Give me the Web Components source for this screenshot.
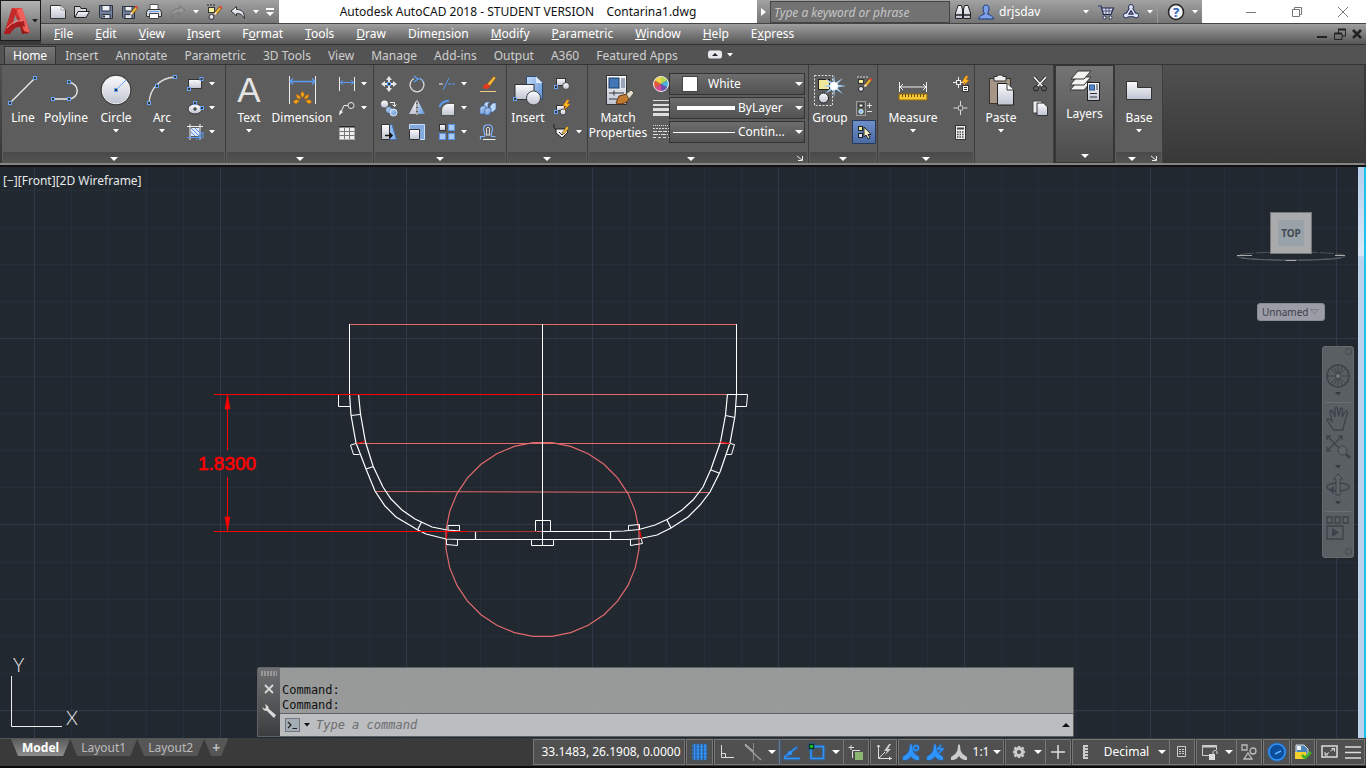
<!DOCTYPE html>
<html lang="en">
<head>
<meta charset="utf-8">
<title>Autodesk AutoCAD 2018</title>
<style>
  html, body { height: 100%; }
  body {
    margin: 0;
    overflow: hidden;
    background: #111;
    color: #fff;
    font: 12px/16px "Noto Sans", "Open Sans", sans-serif;
  }
</style>
</head>
<body>
<cad-app>
  <app-header slot="header"></app-header>
  <ribbon-tabs slot="header">
    <button class="active">Home</button><button>Insert</button><button>Annotate</button><button>Parametric</button><button>3D Tools</button><button>View</button><button>Manage</button><button>Add-ins</button><button>Output</button><button>A360</button><button>Featured Apps</button>
  </ribbon-tabs>
  <cad-ribbon slot="header">
    <ribbon-panel style="--w:224px; --cols:40px 46px 54px 38px 42px">
      <big-tool icon="line">Line</big-tool>
      <big-tool icon="polyline">Polyline</big-tool>
      <big-tool icon="circle" menu>Circle</big-tool>
      <big-tool icon="arc" menu>Arc</big-tool>
      <tool-stack>
        <small-tool icon="rect" menu label="Rectangle"></small-tool>
        <small-tool icon="ellipse" menu label="Ellipse"></small-tool>
        <small-tool icon="hatch" menu label="Hatch"></small-tool>
      </tool-stack>
    </ribbon-panel>
    <ribbon-panel style="--w:148px; --cols:44px 62px 40px">
      <big-tool icon="text" menu>Text</big-tool>
      <big-tool icon="dimension">Dimension</big-tool>
      <tool-stack>
        <small-tool icon="linear" menu label="Linear"></small-tool>
        <small-tool icon="leader" menu label="Leader"></small-tool>
        <small-tool icon="table" label="Table"></small-tool>
      </tool-stack>
    </ribbon-panel>
    <ribbon-panel style="--w:133px; --cols:28px 30px 41px 32px">
      <tool-stack>
        <small-tool icon="move" label="Move"></small-tool>
        <small-tool icon="copy" label="Copy"></small-tool>
        <small-tool icon="stretch" label="Stretch"></small-tool>
      </tool-stack>
      <tool-stack>
        <small-tool icon="rotate" label="Rotate"></small-tool>
        <small-tool icon="mirror" label="Mirror"></small-tool>
        <small-tool icon="scale" label="Scale"></small-tool>
      </tool-stack>
      <tool-stack>
        <small-tool icon="trim" menu label="Trim"></small-tool>
        <small-tool icon="fillet" menu label="Fillet"></small-tool>
        <small-tool icon="array" menu label="Array"></small-tool>
      </tool-stack>
      <tool-stack>
        <small-tool icon="erase" label="Erase"></small-tool>
        <small-tool icon="explode" label="Explode"></small-tool>
        <small-tool icon="offset" label="Offset"></small-tool>
      </tool-stack>
    </ribbon-panel>
    <ribbon-panel style="--w:81px; --cols:40px 40px">
      <big-tool icon="insert">Insert</big-tool>
      <tool-stack>
        <small-tool icon="block" label="Create block"></small-tool>
        <small-tool icon="blockedit" label="Edit block"></small-tool>
        <small-tool icon="attrib" menu label="Edit attributes"></small-tool>
      </tool-stack>
    </ribbon-panel>
    <ribbon-panel launcher style="--w:221px; --cols:58px 22px 138px">
      <big-tool icon="match">Match<br>Properties</big-tool>
      <tool-stack>
        <small-tool icon="wheel" label="Object color"></small-tool>
        <small-tool icon="weights" label="Lineweight"></small-tool>
        <small-tool icon="types" label="Linetype"></small-tool>
      </tool-stack>
      <tool-stack>
        <prop-combo label="Color" value="White" kind="swatch"></prop-combo>
        <prop-combo label="Lineweight" value="ByLayer" kind="thick"></prop-combo>
        <prop-combo label="Linetype" value="Contin..." kind="thin"></prop-combo>
      </tool-stack>
    </ribbon-panel>
    <ribbon-panel style="--w:69px; --cols:40px 27px">
      <big-tool icon="group">Group</big-tool>
      <tool-stack>
        <small-tool icon="groupedit" label="Group edit"></small-tool>
        <small-tool icon="ungroup" label="Ungroup"></small-tool>
        <small-tool icon="groupsel" label="Group selection" on></small-tool>
      </tool-stack>
    </ribbon-panel>
    <ribbon-panel style="--w:97px; --cols:68px 28px">
      <big-tool icon="measure" menu>Measure</big-tool>
      <tool-stack>
        <small-tool icon="quicksel" label="Quick select"></small-tool>
        <small-tool icon="point" label="Point"></small-tool>
        <small-tool icon="calc" label="Calculator"></small-tool>
      </tool-stack>
    </ribbon-panel>
    <ribbon-panel plain style="--w:79px; --cols:50px 28px">
      <big-tool icon="paste" menu>Paste</big-tool>
      <tool-stack>
        <small-tool icon="cut" label="Cut"></small-tool>
        <small-tool icon="clip" label="Copy clip"></small-tool>
      </tool-stack>
    </ribbon-panel>
    <ribbon-panel raised style="--w:61px; --cols:57px">
      <big-tool icon="layers">Layers</big-tool>
    </ribbon-panel>
    <ribbon-panel launcher style="--w:48px; --cols:46px">
      <big-tool icon="base" menu>Base</big-tool>
    </ribbon-panel>
  </cad-ribbon>
  <drawing-area>
    <view-cube></view-cube>
    <nav-bar></nav-bar>
    <command-line></command-line>
  </drawing-area>
  <layout-tabs slot="footer"></layout-tabs>
  <status-bar slot="footer"></status-bar>
</cad-app>

<script>
// every icon is [width, height, markup]
const DEFS = `<defs>
  <linearGradient id="g" x1="0" y1="0" x2="0" y2="1"><stop offset="0" stop-color="#fbfbfd"/><stop offset="1" stop-color="#bfc4d2"/></linearGradient>
  <linearGradient id="b" x1="0" y1="0" x2="1" y2="1"><stop offset="0" stop-color="#c4dcfa"/><stop offset="1" stop-color="#5d8ed0"/></linearGradient>
  <linearGradient id="r" x1="0" y1="0" x2="0" y2="1"><stop offset="0" stop-color="#e8403c"/><stop offset="1" stop-color="#8e1517"/></linearGradient>
</defs>`;
const grip = (x, y) => `<rect x="${x - 1.5}" y="${y - 1.5}" width="3" height="3" fill="#333" stroke="#6aa4f8"/>`;
const PENCIL = `<path d="M8 11L9 8L14 2L16 4L11 10Z" fill="#efb63c" stroke="#5b3d10" stroke-width=".7"/><path d="M13 3L14 1.500L16 3L15 5Z" fill="#e0443a"/><path d="M8 11L9 8L11 10Z" fill="#fff"/>`;
const BOLT = `<path d="M13 0L9 6H12L10 10L16 4H13L15 0Z" fill="#ffc21e" stroke="#e8730d" stroke-width=".6"/>`;
const PERSON = `<path d="M8 0C6.500 1 7 4 6.500 6C6 9 3 11 0 13V16C3.500 16.500 6 15 8 12C10 15 12.500 16.500 16 16V13C13 11 10 9 9.500 6C9 4 9.500 1 8 0Z" fill="currentColor"/>`;

const ICONS = {
  logo: [26, 28, `<path d="M0 27L8 1H18L26 26L18 27L16 20L8 21L6 27Z" fill="url(#r)"/><path d="M8 1L13 3L6 27H0Z" fill="#c52a2b"/><path d="M18 1L26 26L20 24L13 3Z" fill="#f0605a"/><path d="M0 27C5 18 12 13 20 14L21 20C15 17 10 21 6 27Z" fill="#a91d20"/><path d="M11 8L14 14L9 17Z" fill="#8f8f8f"/><path d="M3 21C8 15 14 13 19 14" stroke="#f7938c" fill="none"/>`],
  new: [16, 16, `<path d="M.5 1.500H11L15.500 6V14.500H.5Z" fill="url(#g)" stroke="#333"/><path d="M11 1.500V6H15.500Z" fill="#fff" stroke="#777" stroke-width=".7"/>`],
  open: [16, 16, `<path d="M.5 13.500V2.500H6L7 4.500H12.500V7" fill="#d6d8de" stroke="#222"/><path d="M1 13.500L4 7.500H15.500L12 13.500Z" fill="url(#g)" stroke="#222"/>`],
  save: [16, 16, `<path d="M1.500 1.500H14.500V14.500H3L1.500 13Z" fill="#70809a" stroke="#2c3340"/><path d="M4 1.500H12V7H4Z" fill="#eef0f4" stroke="#2c3340"/><path d="M4 10.500H12V14.500H4Z" fill="#dfe3ea" stroke="#2c3340"/><path d="M6 11.500V13.500" stroke="#2c3340" stroke-width="2"/>`],
  saveas: [16, 16, `<path d="M.5 2.500H12.500V14.500H2L.5 13Z" fill="#70809a" stroke="#2c3340"/><path d="M3 2.500H10V7H3Z" fill="#eef0f4" stroke="#2c3340"/><path d="M3 10.500H10V14.500H3Z" fill="#dfe3ea" stroke="#2c3340"/>${PENCIL}`],
  print: [16, 16, `<path d="M4 .5H12V6H4Z" fill="#fff" stroke="#555"/><path d="M2 5.500H14L15.500 8V12.500H.5V8Z" fill="#d5d8de" stroke="#333"/><path d="M3.500 9.500H12.500V14.500H3.500Z" fill="#fff" stroke="#444"/><path d="M3 7.500H13" stroke="#6aa4f8"/>`],
  redo: [16, 16, `<path d="M15 6L9.500 1.500V4.500C4 4.500 1.500 7 1.500 13.500C4 9.500 6 8.500 9.500 8.500V11Z" fill="#969696" stroke="#777"/>`],
  undo: [16, 16, `<path d="M1 7L6.500 2.500V5.500C12 5.500 14.500 8 14.500 14.500C12 10.500 10 9.500 6.500 9.500V12Z" fill="url(#g)" stroke="#333"/>`],
  qmatch: [16, 16, `<path d="M1 1H10" stroke="#222" stroke-dasharray="2 1"/><rect x="2.500" y="3.500" width="6" height="5" fill="#f5f0a0" stroke="#333"/><circle cx="5.500" cy="13" r="2.500" fill="url(#g)" stroke="#333"/>${PENCIL}`],
  custom: [10, 8, `<path d="M1 1H9" stroke="#fff" stroke-width="2"/><path d="M1 4H9L5 8Z" fill="#fff"/>`],
  bino: [16, 16, `<g fill="url(#g)" stroke="#222"><path d="M3 1.500H6.500L7.500 6V14.500H.5V9Z"/><path d="M9.500 1.500H13L15.500 9V14.500H8.500V6Z"/></g><path d="M.5 11H7M9 11H15.500M7 6H9" stroke="#222" stroke-width="1.500"/>`],
  user: [16, 16, `<path d="M5 4C5 0 11 0 11 4C11 7 10 9 9.500 10C12 11 15 12 15.500 15H.5C1 12 4 11 6.500 10C6 9 5 7 5 4Z" fill="#7ba0e8" stroke="#1f3b80"/>`],
  cart: [16, 16, `<path d="M0 2H3L5.500 10.500H13L15.500 4H4" fill="#d8dce8" stroke="#222a55" stroke-width="1.200"/><path d="M5 7H14M8 4V10M11 4V10" stroke="#222a55" stroke-width=".7"/><circle cx="6.500" cy="13.500" r="1.500" fill="#fff" stroke="#222a55"/><circle cx="12.500" cy="13.500" r="1.500" fill="#fff" stroke="#222a55"/>`],
  a360: [16, 16, `<path d="M8 4L12.500 11.500H3.500Z" fill="none" stroke="#222a55" stroke-width="3.500"/><g fill="#dfe6f7" stroke="#222a55"><circle cx="8" cy="3" r="2.500"/><circle cx="3" cy="11.500" r="2.500"/><circle cx="13" cy="11.500" r="2.500"/></g><path d="M8 4L12.500 11.500H3.500Z" fill="none" stroke="#dfe6f7" stroke-width="1.500"/>`],
  help: [18, 18, `<circle cx="9" cy="9" r="7.500" fill="#f4f6fb" stroke="#222" stroke-width="1.500"/><text x="9" y="14" text-anchor="middle" font-family="Open Sans, sans-serif" font-weight="bold" font-size="13" fill="#2a5fb8">?</text>`],
  min: [10, 10, `<path d="M0 5.500H10" stroke="#777"/>`],
  max: [10, 10, `<path d="M.5 2.500H7.500V9.500H.5ZM2.500 2.500V.5H9.500V7.500H7.500" fill="none" stroke="#777"/>`],
  close: [10, 10, `<path d="M0 0L10 10M10 0L0 10" stroke="#777"/>`],
  dmin: [12, 12, `<path d="M1 9H11" stroke="#222" stroke-width="2"/>`],
  dmax: [12, 12, `<path d="M.5 5.500H8V11.500H.5ZM4.500 5V1.500H11.500V8H8" fill="none" stroke="#222"/><path d="M.5 5.500H8M4 1.500H12" stroke="#222" stroke-width="2"/>`],
  dclose: [10, 12, `<path d="M1 2L9 10M9 2L1 10" stroke="#222" stroke-width="2.500"/>`],
  pill: [14, 10, `<rect x=".5" y="1" width="13" height="7" rx="1.500" fill="#e6e6ee" stroke="#eee"/><path d="M7 3L10 6H4Z" fill="#222"/>`],
  line: [32, 32, `<path d="M3 29L28 4" stroke="#eee" stroke-width="1.300"/>${grip(3, 29)}${grip(28, 4)}`],
  polyline: [32, 32, `<path d="M3 25H19A8 8 0 0 0 19 8.500" fill="none" stroke="#eee" stroke-width="1.400"/>${grip(3, 25)}${grip(19, 25)}${grip(19, 8)}`],
  circle: [32, 32, `<circle cx="16" cy="16" r="14" fill="url(#g)" stroke="#eee"/><circle cx="16" cy="16" r="15" fill="none" stroke="#383838"/><path d="M16 16L26 6" stroke="#6aa4f8"/>${grip(16, 16)}`],
  arc: [32, 32, `<path d="M3 29C4 14 14 4 29 3" fill="none" stroke="#ddd" stroke-width="1.400"/>${grip(3, 29)}${grip(11, 12)}${grip(29, 3)}`],
  rect: [16, 16, `<rect x="1.500" y="3.500" width="13" height="9" fill="url(#g)" stroke="#333"/>${grip(2, 13)}${grip(14.5, 3)}`],
  ellipse: [16, 16, `<ellipse cx="8" cy="9" rx="7" ry="5" fill="url(#g)" stroke="#333"/><path d="M8 7V11M6 9H10" stroke="#222"/>${grip(8, 3)}${grip(15, 8)}`],
  hatch: [16, 16, `<path d="M3 0V16M13 0V16M0 2.500H16M0 13.500H16" stroke="#eee"/><rect x="4" y="4" width="8" height="8" fill="#dde8f8"/><path d="M4 8L8 12M4 4L12 12M8 4L12 8" stroke="#5a8fdc"/><path d="M9 16L16 8V13.500H0M13 6V16" fill="none" stroke="#5a9bf5"/>`],
  text: [32, 32, `<text x="16" y="28" text-anchor="middle" font-family="Liberation Sans, sans-serif" font-size="35" fill="#e4e4e4">A</text>`],
  dimension: [32, 32, `<path d="M3.500 2V30M29.500 2V30" stroke="#eee"/><path d="M4 7.500H29M7 4.500L4 7.500L7 10.500M26 4.500L29 7.500L26 10.500" fill="none" stroke="#5a9bf5" stroke-width="1.300"/><g fill="#f5a318" stroke="#b35d0a" stroke-width=".5"><path d="M16.500 17L18.500 20.500L16.500 24L14.500 20.500Z"/><path d="M10 20L14 22L14.500 25.500L11 24Z"/><path d="M23 20L19 22L18.500 25.500L22 24Z"/><path d="M7 28L10 25.500L13.500 27L10 30Z"/><path d="M26 28L23 25.500L19.500 27L23 30Z"/></g>`],
  linear: [16, 16, `<path d="M.5 1V15M15.500 1V15" stroke="#eee"/><path d="M1 6.500H15M4 4L1.500 6.500L4 9M12 4L14.500 6.500L12 9" fill="none" stroke="#5a9bf5"/>`],
  leader: [16, 16, `<path d="M1 14L5 5.500H9" fill="none" stroke="#eee"/><circle cx="12" cy="5.500" r="3" fill="#555" stroke="#eee"/><path d="M0 15.500L1 10L4 12Z" fill="#eee"/>`],
  table: [16, 16, `<rect x=".5" y="1.500" width="15" height="14" fill="#eee" stroke="#aaa"/><path d="M0 2.500H16" stroke="#222" stroke-width="2"/><path d="M.5 7.500H15.500M.5 11.500H15.500M5.500 4V15M10.500 4V15" stroke="#777"/>`],
  move: [16, 16, `<path d="M8 0L11 4H9V6H7V4H5ZM8 16L5 12H7V10H9V12H11ZM0 8L4 5V7H6V9H4V11ZM16 8L12 11V9H10V7H12V5Z" fill="#e6e6e6"/>${grip(8, 8)}`],
  copy: [16, 16, `<circle cx="3.500" cy="4" r="3.500" fill="url(#g)"/><circle cx="8" cy="10" r="3.500" fill="url(#b)" stroke="#333" stroke-width=".6"/><circle cx="12.500" cy="12.500" r="3.500" fill="url(#b)" stroke="#dceafc"/><path d="M9 2.500H13.500V6M11.500 4.500L13.500 6.500L15.500 4.500" fill="none" stroke="#eee"/>`],
  stretch: [16, 16, `<path d="M7 .5H11L15.500 15.500H7Z" fill="#8bb4ea" stroke="#436fb0"/><path d="M.5.5H8.500V15.500H.5Z" fill="url(#g)" stroke="#333"/><path d="M4 11.500H11M8.500 9L11 11.500L8.500 14" fill="none" stroke="#111" stroke-width="1.500"/>`],
  rotate: [16, 16, `<path d="M5 2.500A7 7 0 1 0 11 2.500" fill="none" stroke="#ddd" stroke-width="1.300"/><path d="M5 0L9 3L5 6" fill="none" stroke="#5a9bf5" stroke-width="1.500"/><path d="M9 3C11 2 13 3 15 6" fill="none" stroke="#5a9bf5"/>`],
  mirror: [16, 16, `<path d="M7 1V14H0Z" fill="url(#g)"/><path d="M9 1V14H16Z" fill="url(#b)"/><path d="M8 0V16" stroke="#eee" stroke-dasharray="3 1"/>`],
  scale: [16, 16, `<path d="M.5.5H15.500V15.500H.5Z" fill="#82aade" stroke="#c6dcfb"/><path d="M.5 5.500H10.500V15.500H.5Z" fill="url(#g)" stroke="#333"/>`],
  trim: [16, 16, `<path d="M0 8H4" stroke="#eee"/><path d="M9 8H16" stroke="#5a9bf5" stroke-dasharray="3 1"/><path d="M4 14L10 2" stroke="#5a9bf5"/>`],
  fillet: [16, 16, `<path d="M2.500 15.500V11C2.500 6 6 3.500 10 3.500H15.500V15.500Z" fill="url(#g)" stroke="#333" stroke-width=".7"/><path d="M.5 7C2 3 5 1 10 .8" fill="none" stroke="#5a9bf5" stroke-width="2"/>`],
  array: [16, 16, `<rect x=".5" y=".5" width="6" height="6" fill="url(#g)" stroke="#333"/><g fill="#a9c9f2" stroke="#5b93e0"><rect x="9.500" y=".5" width="6" height="6"/><rect x=".5" y="9.500" width="6" height="6"/><rect x="9.500" y="9.500" width="6" height="6"/></g>`],
  erase: [16, 16, `<path d="M7 8L14 0L16 2L10 10Z" fill="#f3b73e" stroke="#6e4610" stroke-width=".6"/><path d="M3 12C3 8 6 7 8 8L10 10C9 13 6 14 3 12Z" fill="#e23b20"/><path d="M0 15.500H16" stroke="#f4cc8a"/>`],
  explode: [16, 16, `<g stroke="#35609f" stroke-width=".6"><path d="M4 4L6 2H10L8 4V8H4Z" fill="#bcd6f8"/><path d="M0 8L2 6H6V12L4 14H0Z" fill="url(#b)"/><path d="M10 6L13 3H16V9L13 12H10Z" fill="#bcd6f8"/><path d="M5 10L7 8H11V12L9 15H5Z" fill="url(#b)"/></g>`],
  offset: [16, 16, `<path d="M.5 15.500V12.500H4.500C5.500 11 3.500 7 3.500 5C3.500-.7 12.500-.7 12.500 5C12.500 7 10.500 11 11.500 12.500H15.500" fill="none" stroke="#7db4ff" stroke-width="1.200"/><path d="M3 15.500H15.500M6 11H10C8.500 9 10 6 9.500 4.500C9 3 7 3 6.500 4.500C6 6 7.500 9 6 11" fill="none" stroke="#eee"/>`],
  insert: [32, 32, `<path d="M14.500 2.500H24L30.500 9V25H14.500Z" fill="url(#b)" stroke="#2f4c78"/><path d="M24 2.500V9H30.500" fill="#dce9fb"/><rect x="3" y="10.500" width="19" height="15" fill="url(#g)" stroke="#333"/><circle cx="21.500" cy="24" r="7" fill="url(#g)" stroke="#444"/>${grip(3, 25)}`],
  block: [16, 16, `<rect x="2.500" y="2.500" width="9" height="7" fill="url(#g)" stroke="#333"/><circle cx="12" cy="10" r="3.500" fill="url(#g)" stroke="#444"/>${grip(2, 11)}`],
  blockedit: [16, 16, `<rect x="2.500" y="5.500" width="8" height="5" fill="url(#g)" stroke="#333"/><circle cx="9" cy="12" r="3" fill="url(#g)" stroke="#444"/>${grip(2, 12)}${BOLT}`],
  attrib: [16, 16, `<path d="M0 0V4L3 6" fill="none" stroke="#222"/><path d="M2 5H11L14 8L8 14L2 9Z" fill="#eee" stroke="#222"/><path d="M5 8L8 11L11 8" fill="none" stroke="#222"/><path d="M8 9L13 2L15 4L10 10Z" fill="#efb63c" stroke="#5b3d10" stroke-width=".5"/>`],
  match: [32, 32, `<rect x="4.500" y="1.500" width="20" height="29" fill="url(#g)" stroke="#333"/><rect x="7" y="4" width="10" height="10" fill="#4377b5" stroke="#1d3e68"/><path d="M19 4H23V14H19Z" fill="#98a5bb"/><path d="M7 19H22M12 16.500V21.500M7 25H15" stroke="#333"/><path d="M17 22L25 20L27 25C24 30 18 31 14 29Z" fill="#c17a30" stroke="#65360e"/><path d="M24 20L29 16L32 19L27 25Z" fill="#e3dccf" stroke="#554"/>`],
  wheel: [16, 16, `<g stroke="none"><path d="M8 8V.5A7.500 7.500 0 0 1 14.500 4.200Z" fill="#b7d64c"/><path d="M8 8L14.500 4.200A7.500 7.500 0 0 1 14.500 11.800Z" fill="#4bb0dc"/><path d="M8 8L14.500 11.800A7.500 7.500 0 0 1 8 15.500Z" fill="#704dae"/><path d="M8 8V15.500A7.500 7.500 0 0 1 1.500 11.800Z" fill="#d7478b"/><path d="M8 8L1.500 11.800A7.500 7.500 0 0 1 1.500 4.200Z" fill="#e35c37"/><path d="M8 8L1.500 4.200A7.500 7.500 0 0 1 8 .5Z" fill="#f3d14a"/></g><circle cx="8" cy="8" r="7.500" fill="none" stroke="#eee"/>`],
  weights: [16, 16, `<path d="M0 .5H16" stroke="#ddd"/><path d="M0 5H16" stroke="#ddd" stroke-width="2"/><path d="M0 9.500H16" stroke="#ddd" stroke-width="3"/><path d="M0 14.500H16" stroke="#ddd" stroke-width="3"/>`],
  types: [16, 16, `<g stroke="#ddd"><path d="M0 1.500H16" stroke-dasharray="1 1"/><path d="M0 4.500H16" stroke-dasharray="2 1"/><path d="M0 7.500H16" stroke-dasharray="4 1"/><path d="M0 10.500H16" stroke-dasharray="5 1 1 1"/><path d="M0 13.500H16" stroke-dasharray="3 2"/></g>`],
  group: [32, 32, `<rect x=".5" y="1.500" width="18" height="30" fill="none" stroke="#ddd" stroke-dasharray="2 1.500"/><rect x="4.500" y="5.500" width="11" height="10" fill="#f0e89a" stroke="#222"/><circle cx="9.500" cy="24" r="5" fill="url(#g)" stroke="#222"/><path d="M20 0L21 9L29 4L23 10.500L32 12L23 13.500L29 20L21 15L20 24L19 15L11 20L17 13.500L9 12L17 10.500L11 4L19 9Z" fill="#a5d0f8"/><circle cx="20" cy="12" r="4" fill="#fff"/>`],
  groupedit: [16, 16, `<path d="M1 1H12" stroke="#ddd" stroke-dasharray="2 1"/><rect x="2.500" y="3.500" width="5" height="4" fill="#f0e89a" stroke="#333"/><circle cx="5" cy="13" r="2.500" fill="url(#g)" stroke="#222"/>${PENCIL}`],
  ungroup: [16, 16, `<rect x=".5" y="1.500" width="9" height="14" fill="none" stroke="#ddd" stroke-dasharray="1 1"/><rect x="3" y="4" width="4" height="3" fill="#fff" stroke="#222"/><circle cx="5" cy="11.500" r="2" fill="#7db4ff" stroke="#dfe"/><path d="M11 5.500H16M13.500 3V8M11 11.500H16" stroke="#ddd"/>`],
  groupsel: [16, 16, `<rect x="2.500" y="2.500" width="4" height="4" fill="#f0e89a" stroke="#222"/><rect x="2.500" y="9.500" width="4" height="4" fill="#cfe0f6" stroke="#222"/><path d="M8 3V13L10 11L12 15L14 14L12 10.500H15Z" fill="#fbf6c8" stroke="#222"/>`],
  measure: [32, 32, `<path d="M2.500 8V18M29.500 8V18M3 13H29M6 10L3 13L6 16M26 10L29 13L26 16" fill="none" stroke="#eee"/><rect x="2" y="20" width="28" height="6" fill="#f6c634" stroke="#8f6c0c"/><path d="M5.500 20V23M8.500 20V23M11.500 20V23M14.500 20V23M17.500 20V23M20.500 20V23M23.500 20V23M26.500 20V23" stroke="#6b5008"/>`],
  quicksel: [16, 16, `<path d="M5.500 1V12M0 6.500H11" stroke="#eee"/><rect x="3.500" y="4.500" width="4" height="4" fill="#555" stroke="#eee"/>${BOLT}<rect x="9.500" y="9.500" width="6" height="6" fill="#fff" stroke="#333"/><path d="M11 11.500H14M11 13.500H14" stroke="#333"/>`],
  point: [16, 16, `<path d="M7.500 1V15M.5 8H14.500" stroke="#ddd"/><rect x="5.500" y="6" width="4" height="4" fill="#555" stroke="#bbb"/>`],
  calc: [16, 16, `<rect x="2.500" y="1.500" width="10" height="14" fill="#eee" stroke="#333"/><path d="M4 4.500H11" stroke="#444" stroke-width="2"/><path d="M4 8H11M4 10.500H11M4 13H11" stroke="#444" stroke-width="1.500" stroke-dasharray="1.500 1"/>`],
  paste: [32, 32, `<rect x="4.500" y="4.500" width="21" height="25" fill="#a59686" stroke="#3b332b"/><path d="M9 2.500H12L13 1H17L18 2.500H21V7H9Z" fill="#eee" stroke="#333"/><path d="M12.500 9.500H22L28.500 16V31H12.500Z" fill="url(#g)" stroke="#222"/><path d="M22 9.500V16H28.500" fill="#fff" stroke="#333"/>`],
  cut: [16, 16, `<path d="M2 1L11 11M14 1L5 11" stroke="#222" stroke-width="3"/><path d="M2 1L11 11M14 1L5 11" stroke="#eee" stroke-width="1.800"/><circle cx="4" cy="12.500" r="2.500" fill="none" stroke="#222"/><circle cx="12" cy="12.500" r="2.500" fill="none" stroke="#222"/>`],
  clip: [16, 16, `<path d="M1 1H10V13H1Z" fill="#eee" stroke="#444"/><path d="M5 3H11.500L15.500 7V15.500H5Z" fill="url(#g)" stroke="#333"/>`],
  layers: [32, 32, `<g stroke="#333" fill="#f1f3ee"><path d="M1 20L8 12H22L15 20Z"/><path d="M1 15L8 7H22L15 15Z"/><path d="M2 9L9 1H22L15 9Z"/></g><rect x="18.500" y="12.500" width="12" height="18" fill="url(#g)" stroke="#222"/><rect x="20.500" y="15" width="5" height="5" fill="#5486c6" stroke="#2b568d"/><path d="M28 14V20M21 23.500H28M21 27H28" stroke="#333"/>`],
  base: [32, 32, `<path d="M3.500 25.500V7.500H14.500V13.500H28.500V25.500Z" fill="url(#g)" stroke="#333"/>`],
  wheelnav: [24, 24, `<g fill="none" stroke="#3c434a"><circle cx="12" cy="12" r="11" stroke-width="1.500"/><path d="M12 1V23M1 12H23M4 4L20 20M20 4L4 20M7.500 2L16.500 22M16.500 2L7.500 22"/></g><circle cx="12" cy="12" r="2.500" fill="#777c80" stroke="#3c434a"/>`],
  hand: [24, 24, `<path d="M8 23C5 20 3 16 1 13C1 11 3 11 6 14L4 5C4 3 6 3 7 5L9 10L9 2C9 0 11 0 11.500 2L12.500 9L14.500 2C15 0 17 1 16.500 3L16 10L19 5C20 3 22 4 21.500 6L19 14C18 19 17 20 17 23Z" fill="none" stroke="#3c434a" stroke-width="1.300"/>`],
  zoomnav: [24, 24, `<path d="M1 1L16 16M16 1L1 16M1 5V1H5M12 1H16V5M1 12V16H5" fill="none" stroke="#3c434a" stroke-width="1.300"/><circle cx="16.500" cy="15.500" r="4.500" fill="#5d6468" stroke="#3c434a"/><path d="M20 19L24 23" stroke="#3c434a" stroke-width="3"/>`],
  orbit: [24, 24, `<ellipse cx="12" cy="14" rx="11" ry="4" fill="none" stroke="#3c434a" stroke-width="1.300"/><path d="M10 22V6H7.500L12 1L16.500 6H14V22Z" fill="#5d6468" stroke="#3c434a"/><path d="M3 17L8 13V21Z" fill="#3c434a"/>`],
  motion: [24, 24, `<g fill="none" stroke="#3c434a" stroke-width="1.300"><path d="M1 1H6V7H1ZM9 1H14V7H9ZM17 1H22V7H17ZM1 10H17V23H1Z"/></g><path d="M6 12L13 16.500L6 21Z" fill="#3c434a"/>`],
  x: [10, 10, `<path d="M1 1L9 9M9 1L1 9" stroke="#d8d8d8" stroke-width="1.800"/>`],
  wrench: [14, 14, `<path d="M3 0L6 2L7 5L14 11L12 14L5 7L2 6.500L0 3L3 5L4 3Z" fill="#d8d8d8"/>`],
  prompt: [16, 14, `<rect x=".5" y=".5" width="14" height="13" fill="#a4acb6" stroke="#6f7882"/><path d="M3 4L6 7L3 10M7.500 10.500H12" fill="none" stroke="#222" stroke-width="1.200"/>`],
  grid: [16, 16, `<path d="M2.500 0V16M6 0V16M9.500 0V16M13 0V16" stroke="#2e95ff" stroke-width="1.500"/><path d="M0 2.500H16M0 6H16M0 9.500H16M0 13H16" stroke="#2e95ff" stroke-dasharray="1 1"/>`],
  ortho: [16, 16, `<path d="M1.500 1V13.500H14M1.500 9.500H5.500V13.500" fill="none" stroke="#ddd"/>`],
  iso: [18, 18, `<path d="M9.500 0V18" stroke="#888"/><path d="M1 2L17 17" stroke="#999" stroke-width="1.500"/><path d="M1 1L9 8" stroke="#ccc"/>`],
  track: [16, 16, `<path d="M0 14.500H16M0 13.500L13 3" stroke="#2e95ff" stroke-width="1.500"/><circle cx="6" cy="9" r="2" fill="#2e95ff"/>`],
  osnap: [18, 18, `<path d="M3 3.500H15.500V15.500H3Z" fill="none" stroke="#2e95ff" stroke-width="1.500"/><rect x="1.500" y="1.500" width="4" height="4" fill="#1df01d" stroke="#032" stroke-width="1.500"/>`],
  cycle: [16, 16, `<path d="M3 1V6M.5 3.500H6M4.500 14V6.500H12" stroke="#ddd" fill="none"/><rect x="7" y="8" width="8" height="8" fill="#8cb572"/>`],
  ucs: [16, 16, `<path d="M2.500 1V14.500H16M3 14L9 8M1 3L2.500 1L4 3M13 13L15 14.500L13 16" fill="none" stroke="#ddd"/><path d="M13 0L8 7H11L9 11L15 5H12L15 0Z" fill="#ccc"/>`],
  person1: [17, 17, `<g color="#2e95ff">${PERSON}</g><circle cx="13" cy="4" r="2.500" fill="none" stroke="#2e95ff" stroke-width="1.300"/>`],
  person2: [17, 17, `<g color="#2e95ff">${PERSON}</g><path d="M14 1L11 5H16L12 9" fill="none" stroke="#2e95ff" stroke-width="1.300"/>`],
  person3: [16, 16, `<g color="#ccc">${PERSON}</g>`],
  gear: [16, 16, `<circle cx="8" cy="8" r="3.500" fill="none" stroke="#ccc" stroke-width="3"/><path d="M8 2V4M8 12V14M2 8H4M12 8H14M3.500 3.500L5 5M11 11L12.500 12.500M12.500 3.500L11 5M5 11L3.500 12.500" stroke="#ccc" stroke-width="2.500"/>`],
  plus: [16, 16, `<path d="M8 1V15M1 8H15" stroke="#ddd" stroke-width="1.500"/>`],
  ruler: [8, 16, `<path d="M1 1H6V15H1Z" fill="#ccc"/><path d="M3 3.500H6M3 6.500H6M3 9.500H6M3 12.500H6" stroke="#555"/>`],
  props: [12, 14, `<path d="M1.500 1.500H9.500V11.500H1.500Z" fill="none" stroke="#ccc"/><path d="M3 4.500H5M6 4.500H8M3 6.500H5M6 6.500H8M3 8.500H5M6 8.500H8" stroke="#ccc"/>`],
  lock: [16, 16, `<path d="M7 11.500H.5V1.500H14.500V6" fill="none" stroke="#ccc"/><path d="M0 2.500H15" stroke="#ccc" stroke-width="2"/><rect x="7" y="10" width="6" height="6" fill="#ddd"/><path d="M11 10V8C11 6 15 6 15 8V10" fill="none" stroke="#ddd"/>`],
  shapes: [16, 16, `<path d="M1 1H6V6H1ZM7 9L11 15H3Z" fill="none" stroke="#bbb" stroke-width="1.300"/><circle cx="12" cy="7" r="3" fill="none" stroke="#bbb" stroke-width="1.300"/>`],
  perf: [18, 18, `<circle cx="9" cy="9" r="8" fill="#0e4f9b" stroke="#2e95ff" stroke-width="1.500"/><path d="M7 11L13 8" stroke="#59b0ff" stroke-width="1.500"/>`],
  trust: [16, 16, `<path d="M1 1H9L13 5V10H1Z" fill="#4d84b8" stroke="#ddd"/><path d="M0 8H11V15H0Z" fill="#f2cf2c"/><path d="M2 2H6V6H2Z" fill="#eee"/><path d="M7 11L10 14L16 8" fill="none" stroke="#3fae2a" stroke-width="2.500"/>`],
  full: [18, 14, `<rect x="1" y="1" width="15" height="11" fill="none" stroke="#ddd" stroke-width="1.500"/><path d="M9.500 6L13.500 3.500M10.500 3.500H13.500V6.500M8 7.500L4 10M4 7V10H7" fill="none" stroke="#ddd"/>`],
  burger: [16, 14, `<path d="M0 2H16M0 7.500H16M0 13H16" stroke="#ddd" stroke-width="1.500"/>`],
  down: [8, 5, `<path d="M0 0H8L4 4Z" fill="currentColor"/>`],
  drop: [6, 4, `<path d="M0 0H6L3 3.500Z" fill="currentColor"/>`],
  up: [8, 5, `<path d="M0 4H8L4 0Z" fill="currentColor"/>`],
  right: [5, 8, `<path d="M0 0V8L5 4Z" fill="#fff"/>`],
  launch: [6, 6, `<path d="M0 1L5 5M5.500 1V5.500H1" fill="none" stroke="#eee"/>`]
};

const BUTTON_RESET = `
  button { margin: 0; padding: 0; border: 0; background: none; color: inherit; font: inherit; display: flex; align-items: center; justify-content: center; }
`;

class CadElement extends HTMLElement {
  constructor() {
    super();
    this.attachShadow({ mode: "open" });
    const template = document.createElement("template");
    template.innerHTML = this.render();
    this.shadowRoot.appendChild(template.content.cloneNode(true));
  }
}

class CadIcon extends CadElement {
  render() {
    const [w, h, body] = ICONS[this.getAttribute("name")];
    return `<style>:host { display: inline-block; flex: none; line-height: 0; } svg { display: block; overflow: visible; }</style>
      <svg width="${w}" height="${h}" viewBox="0 0 ${w} ${h}" aria-hidden="true">${DEFS}${body}</svg>`;
  }
}

const icon = (name) => `<cad-icon name="${name}"></cad-icon>`;
const iconButton = (name, label, cls = "") =>
  `<button class="${cls}" aria-label="${label}">${icon(name)}</button>`;

class CadApp extends CadElement {
  render() {
    return `<style>
        :host { display: flex; flex-direction: column; height: 100vh; }
        main { flex: 1; min-height: 0; display: flex; }
        footer { display: flex; justify-content: space-between; background: #3a3a3a; height: 28px; border-bottom: 2px solid #0d0a0c; }
        ::slotted(drawing-area) { flex: 1; }
      </style>
      <header><slot name="header"></slot></header>
      <main><slot></slot></main>
      <footer><slot name="footer"></slot></footer>`;
  }
}

class AppHeader extends CadElement {
  render() {
    const menus = ["<u>F</u>ile", "<u>E</u>dit", "<u>V</u>iew", "<u>I</u>nsert", "F<u>o</u>rmat", "<u>T</u>ools", "<u>D</u>raw", "Dime<u>n</u>sion", "<u>M</u>odify", "<u>P</u>arametric", "<u>W</u>indow", "<u>H</u>elp", "E<u>x</u>press"];
    return `<style>${BUTTON_RESET}
        :host { display: grid; grid-template-columns: 41px 1fr; grid-template-rows: 24px 21px; background: #3a3a3a; }
        .logo { grid-row: 1 / 3; height: 41px; box-sizing: border-box; border: 1px solid #1b1b1b; background: linear-gradient(#b3b3b3, #5f5f5f); gap: 2px; color: #222; }
        .title { display: flex; background: #fff; border-bottom: 1px solid #444; box-sizing: border-box; }
        .qat, .info { display: flex; background: linear-gradient(#a2a2a2, #757575); }
        .qat { padding-left: 5px; box-sizing: border-box; width: 238px; }
        .qat button { width: 24px; }
        .qat .drop { width: 12px; }
        .qat .custom { width: 16px; }
        .name { flex: 1; text-align: center; white-space: pre; color: #111; line-height: 23px; font-size: 12px; }
        .info { width: 445px; }
        .info .go { width: 13px; }
        input { width: 180px; box-sizing: border-box; margin: 1px 0 0; padding: 0 3px; border: 1px solid #444; background: #727272; font: italic 12px/16px "Noto Sans", sans-serif; color: #fff; height: 22px; }
        input::placeholder { color: #c6c6c6; opacity: 1; }
        .info .ic { width: 25px; }
        .user { flex: 1; justify-content: flex-start; padding-left: 3px; gap: 5px; }
        .drop { width: 14px; }
        .sep { border-left: 1px solid #999; margin-right: 6px; }
        .help { width: 24px; }
        .win { display: flex; width: 164px; justify-content: flex-end; }
        .win button { width: 46px; }
        nav { display: flex; align-items: center; padding-left: 13px; background: linear-gradient(#a0a0a0, #565656); border-bottom: 1px solid #333; gap: 22px; }
        nav .doc { margin-left: auto; display: flex; gap: 6px; padding-right: 4px; }
      </style>
      <button class="logo" aria-label="Application menu">${icon("logo")}${icon("drop")}</button>
      <div class="title">
        <div class="qat">
          ${iconButton("new", "New")}${iconButton("open", "Open")}${iconButton("save", "Save")}${iconButton("saveas", "Save as")}${iconButton("print", "Plot")}${iconButton("redo", "Redo")}${iconButton("drop", "More", "drop")}${iconButton("qmatch", "Match")}${iconButton("undo", "Undo")}${iconButton("drop", "More", "drop")}${iconButton("custom", "Customize", "custom")}
        </div>
        <div class="name">Autodesk AutoCAD 2018 - STUDENT VERSION    Contarina1.dwg</div>
        <div class="info">
          ${iconButton("right", "Toggle search", "go")}
          <input type="search" aria-label="Search" placeholder="Type a keyword or phrase">
          ${iconButton("bino", "Find", "ic")}
          <button class="user">${icon("user")}<span>drjsdav</span></button>
          ${iconButton("drop", "Account", "drop")}
          ${iconButton("cart", "Store", "ic")}${iconButton("a360", "A360", "ic")}${iconButton("drop", "More", "drop")}
          <span class="sep"></span>
          ${iconButton("help", "Help", "help")}${iconButton("drop", "More", "drop")}
        </div>
        <div class="win">${iconButton("min", "Minimize")}${iconButton("max", "Restore")}${iconButton("close", "Close")}</div>
      </div>
      <nav>${menus.map((m) => `<button><span>${m}</span></button>`).join("")}
        <div class="doc">${iconButton("dmin", "Minimize drawing")}${iconButton("dmax", "Restore drawing")}${iconButton("dclose", "Close drawing")}</div>
      </nav>`;
  }
}

class RibbonTabs extends CadElement {
  render() {
    return `<style>${BUTTON_RESET}
        :host { display: flex; height: 20px; padding: 0 4px; background: #535353; border-bottom: 1px solid #333; box-sizing: border-box; align-items: flex-end; }
        ::slotted(button) { margin: 0; border: 1px solid transparent; border-bottom: 0; background: none; font: inherit; color: #cfcfcf; padding: 0 7px 0 8px; height: 18px; line-height: 16px; }
        ::slotted(.active) { background: linear-gradient(#777, #5d5d5d); border-color: #333; color: #fff; padding: 0 8px; }
        .opts { display: flex; gap: 5px; height: 18px; margin-left: 22px; }
      </style>
      <slot></slot><div class="opts">${iconButton("pill", "Minimize ribbon")}${iconButton("drop", "Ribbon options")}</div>`;
  }
}

class CadRibbon extends CadElement {
  render() {
    return `<style>
        :host { display: flex; height: 98px; padding-left: 2px; background: linear-gradient(#505050, #383838); border-bottom: 2px solid #858585; border-right: 2px solid #3a3a3a; margin-bottom: 2px; }
      </style><slot></slot>`;
  }
}

class RibbonPanel extends CadElement {
  render() {
    const plain = this.hasAttribute("plain");
    const launcher = this.hasAttribute("launcher");
    return `<style>${BUTTON_RESET}
        :host { display: flex; flex-direction: column; flex: none; box-sizing: border-box; width: var(--w); background: #5d5d5d; border-right: 1px solid #3e3e3e; }
        :host([raised]) { background: linear-gradient(#747474, #4c4c4c); border: 2px solid #363636; border-width: 1px 2px; }
        .body { flex: 1; display: grid; grid-template-columns: var(--cols); padding: 7px 0 0 1px; align-items: start; }
        :host([raised]) .body { padding: 2px 0 0; }
        .foot { display: flex; height: 11px; margin: 0 1px; background: linear-gradient(#4a4a4a, #545454); }
        :host([raised]) .foot { background: none; margin-bottom: 2px; }
        .foot .more { flex: 1; padding-top: 3px; }
        .foot .launch { width: 14px; }
      </style>
      <div class="body"><slot></slot></div>
      ${plain ? "" : `<div class="foot">${iconButton("down", "Panel options", "more")}${launcher ? iconButton("launch", "Open dialog", "launch") : ""}</div>`}`;
  }
}

class ToolStack extends CadElement {
  render() {
    return `<style>:host { display: grid; grid-auto-rows: 24px; }</style><slot></slot>`;
  }
}

class BigTool extends CadElement {
  render() {
    return `<style>${BUTTON_RESET}
        :host { display: flex; justify-content: center; }
        button { flex-direction: column; padding-top: 2px; }
        span { display: block; line-height: 15px; margin: 4px -8px 0; white-space: nowrap; }
        .caret { margin-top: 4px; }
      </style>
      <button>${icon(this.getAttribute("icon"))}<span><slot></slot></span>${this.hasAttribute("menu") ? `<cad-icon class="caret" name="drop"></cad-icon>` : ""}</button>`;
  }
}

class SmallTool extends CadElement {
  render() {
    const label = this.getAttribute("label");
    return `<style>${BUTTON_RESET}
        :host { display: flex; align-items: center; padding-left: 3px; }
        button { height: 22px; }
        .main { width: 22px; }
        .menu { width: 12px; }
        :host([on]) .main { background: linear-gradient(#6d8fcb, #4a6ba4); outline: 1px solid #27395c; }
      </style>
      ${iconButton(this.getAttribute("icon"), label, "main")}${this.hasAttribute("menu") ? iconButton("drop", label + " options", "menu") : ""}`;
  }
}

class PropCombo extends CadElement {
  render() {
    return `<style>
        :host { display: flex; align-items: center; }
        label { display: flex; align-items: center; width: 136px; height: 22px; box-sizing: border-box; border: 1px solid #333; background: linear-gradient(#6d6d6d, #525252); padding-right: 1px; }
        i { flex: none; background: #fff; }
        .thick { width: 58px; height: 4px; margin-left: 7px; }
        .thin { width: 62px; height: 1px; margin-left: 3px; }
        .swatch { width: 14px; height: 14px; margin: 0 7px 0 12px; border: 1px solid #444; }
        select { appearance: none; flex: 1; min-width: 0; margin: 0; padding: 0 0 0 3px; border: 0; background: none; color: #fff; font: inherit; height: 18px; }
      </style>
      <label><i class="${this.getAttribute("kind")}"></i>
        <select aria-label="${this.getAttribute("label")}"><option>${this.getAttribute("value")}</option></select>
        <cad-icon name="down"></cad-icon></label>`;
  }
}

// Drawing is kept in window units; the group shifts it below the ribbon.
class DrawingArea extends CadElement {
  render() {
    const circle = [];
    for (let i = 0; i < 32; i++) {
      const a = ((i + 0.5) * Math.PI) / 16;
      circle.push(`${(542.5 + 97 * Math.cos(a)).toFixed(1)},${(539.5 + 97.3 * Math.sin(a)).toFixed(1)}`);
    }
    return `<style>
        :host { display: flex; position: relative; background: #212830; overflow: hidden; }
        .view { flex: 1; min-width: 0; position: relative; }
        svg { position: absolute; inset: 0; width: 100%; height: 100%; }
        .label { position: absolute; left: 3px; top: 6px; display: flex; }
        .strip { width: 6px; background: linear-gradient(#b6cfec, #dbe8f6 88px, #bcd2ec 90px); border-right: 2px solid #20c0e8; }
        button { border: 0; padding: 0; background: none; color: #e8e8e8; font: inherit; }
      </style>
      <div class="view">
        <svg role="img" aria-label="Model space">
          <defs><pattern id="grid" x="34" y="171" width="186" height="186" patternUnits="userSpaceOnUse">
            <path d="M37.500 0V186M74.500 0V186M112.500 0V186M149.500 0V186M0 38.500H186M0 75.500H186M0 112.500H186M0 149.500H186" stroke="#262f39"/>
            <path d="M.5 0V186M0 .5H186" stroke="#303849"/>
          </pattern></defs>
          <rect width="100%" height="100%" fill="url(#grid)"/>
          <g transform="translate(0 -167)" fill="none" stroke="#fff">
            <g stroke="#e06a6c">
              <path d="M349.500 324.500H736.500M542 394.500H727M357 443.500H730M375 491.500L710 492.500M460 531.500H542"/>
              <polygon points="${circle.join(" ")}" stroke-width="1.200"/>
            </g>
            <path d="M349.500 324V394M736.500 324V394M542.500 324V545"/>
            <path d="M338.500 394.500V406.500H350M338.500 394.500H358.500M727.500 394.500H747.500L746.500 406.500H735.500"/>
            <g stroke-width="1.200">
              <path d="M349.500 394L351 415L356 443L358 448L366 469L375 491L385 506L396 517L418 530L426 534L446 539L460 539.500H628L640 538.500L657 535L671 528L688 517L700 505L710 492L720 472L730 443L735 416L736.500 394"/>
              <path d="M358.500 394L360.500 414L365.500 442L373 466L383 487L391 499L402 510L415 519L432 527L447 530L460 531M542 531.500H610L624 531L639 529.500L655 525L668 519L682 510L693 500L703 487L711 469L720.500 442L725.500 415L727.500 394"/>
              <path d="M351 415.500L360 414.500M366 469L373.500 466.500M417.500 530L421.500 522M475.500 531V539M610.500 531V539M725.500 415.500L735 417.500M711 470L719 473M667 520L671 528"/>
            </g>
            <path d="M356 443.500L350.500 445L353.500 454.500H359.500M730 443.500L734.500 444.500L731.500 454.500H726.500M448 530V525.500H459.500V531M446.500 539L446.500 544.500L457.500 545.500V540M628.500 531V525.500L639.500 524.500V530M630.500 539V545.500L642.500 543.500L641 538"/>
            <path d="M535.500 531.500V520.500H550.500V531.500M531.500 539.500V545.500H553.500V539.500"/>
            <g stroke="#f00">
              <path d="M214 394.500H542M214 531.500H467M227.500 394V450M227.500 477V531M356.500 443.500L365 441.500M720 442L730 443.500M639.500 530L641.500 539M447 530L446.500 539"/>
              <path d="M467 531.500H537" stroke="#a33"/>
              <path d="M227.500 394L230 409H225ZM227.500 531L225 517H230Z" fill="#f00" stroke-width=".5"/>
            </g>
            <text x="198" y="470" fill="#f00" stroke="#f00" stroke-width=".6" font-family="Liberation Sans, sans-serif" font-size="19">1.8300</text>
            <path d="M11.500 676V726.500H62" stroke="#eee"/>
            <g fill="#eee" stroke="none" font-family="Lato, sans-serif" font-weight="300" font-size="19">
              <text x="13" y="672">Y</text><text x="66" y="725">X</text>
            </g>
          </g>
        </svg>
        <div class="label"><button>[−]</button><button>[Front]</button><button>[2D Wireframe]</button></div>
        <slot></slot>
      </div>
      <div class="strip"></div>`;
  }
}

class ViewCube extends CadElement {
  render() {
    return `<style>
        :host { position: absolute; top: 45px; right: 12px; width: 110px; display: flex; flex-direction: column; align-items: center; }
        .cube { position: relative; z-index: 1; width: 42px; height: 42px; padding: 7px; box-sizing: border-box; border: 1px solid #777; background: #a8aaac; font: inherit; font-weight: bold; font-size: 10px; line-height: 14px; color: #434b52; display: grid; }
        .cube span { background: #98a2a8; display: grid; place-items: center; }
        svg { display: block; margin-top: -4px; }
        .ucs { display: flex; align-items: center; justify-content: space-between; box-sizing: border-box; width: 68px; height: 18px; margin-top: 41px; padding: 0 5px 0 4px; border: 1px solid #8a8c94; border-radius: 3px; background: #9b9ca6; color: #3b3f4c; font: inherit; font-size: 10px; line-height: 14px; }
        .ucs svg { margin: 0; }
      </style>
      <button class="cube"><span>TOP</span></button>
      <svg width="110" height="12"><ellipse cx="55" cy="6" rx="54" ry="4" fill="none" stroke="#4c5459" stroke-dasharray="14 2"/><path d="M5 8C25 11 85 11 105 8" fill="none" stroke="#5c6468"/><path d="M1 5.500H16M99 5.500H109M50 10.500H60" stroke="#aaa"/></svg>
      <button class="ucs">Unnamed<svg width="9" height="6"><path d="M.5.5H8.500L4.500 5Z" fill="none" stroke="#7c7e88"/></svg></button>`;
  }
}

class NavBar extends CadElement {
  render() {
    return `<style>${BUTTON_RESET}
        :host { position: absolute; top: 179px; right: 4px; width: 32px; height: 212px; display: flex; flex-direction: column; align-items: center; box-sizing: border-box; background: #595f63; border: 1px solid #656a6e; border-radius: 3px; color: #333a40; }
        button { height: 26px; }
        .d { height: 10px; }
        .c { width: 7px; height: 7px; border: 1px solid #42494e; border-radius: 50%; align-self: flex-end; margin: 1px 1px 0; }
        hr { width: 26px; margin: 3px 0; border: 0; border-top: 1px solid #6b7074; }
        .first { margin-top: 8px; }
        .wide { height: 30px; }
        .end { margin-top: auto; margin-bottom: 2px; }
      </style>
      <button class="c" aria-label="Close"></button>
      ${iconButton("wheelnav", "Steering wheel", "first")}${iconButton("drop", "More", "d")}<hr>
      ${iconButton("hand", "Pan")}${iconButton("zoomnav", "Zoom", "wide")}${iconButton("drop", "More", "d")}
      ${iconButton("orbit", "Orbit")}${iconButton("drop", "More", "d")}<hr>
      ${iconButton("motion", "ShowMotion")}
      <button class="c end" aria-label="Options"></button>`;
  }
}

class CommandLine extends CadElement {
  render() {
    return `<style>${BUTTON_RESET}
        :host { position: absolute; left: 257px; right: 284px; bottom: 1px; display: flex; border: 1px solid #606366; border-radius: 2px 0 0; box-sizing: border-box; color: #111; font: 12px/15px "DejaVu Sans Mono", monospace; }
        .side { width: 22px; box-sizing: border-box; background: linear-gradient(#6e7072, #3b3d3f); display: flex; flex-direction: column; align-items: center; gap: 8px; padding-top: 3px; }
        .grip { width: 16px; height: 5px; background: repeating-linear-gradient(90deg, #999 0 2px, transparent 2px 3px); }
        .side button { height: 10px; }
        .side .tool { height: 18px; }
        .main { flex: 1; min-width: 0; }
        .log { padding: 15px 2px 0; background: rgba(165, 166, 166, .9); border-bottom: 1px solid #606366; }
        .log div { white-space: pre; }
        .row { display: flex; align-items: center; height: 22px; background: rgba(204, 205, 207, .9); padding: 0 3px 0 5px; gap: 3px; }
        input { flex: 1; border: 0; background: none; font: inherit; font-style: italic; padding: 0 0 0 3px; margin: 0; }
        input::placeholder { color: #6d6d70; opacity: 1; }
      </style>
      <div class="side"><div class="grip"></div>${iconButton("x", "Close")}${iconButton("wrench", "Customize", "tool")}</div>
      <div class="main">
        <div class="log"><div>Command:</div><div>Command:</div></div>
        <div class="row">${iconButton("prompt", "Recent commands")}${iconButton("drop", "More")}<input aria-label="Command" placeholder="Type a command">${iconButton("up", "History")}</div>
      </div>`;
  }
}

class LayoutTabs extends CadElement {
  render() {
    return `<style>${BUTTON_RESET}
        :host { display: flex; padding-left: 11px; align-items: flex-start; border-top: 1px solid #555; }
        button { box-sizing: border-box; height: 17px; padding: 0 11px; background: #565656; color: #bbb; clip-path: polygon(0 0, 100% 0, calc(100% - 7px) 100%, 7px 100%); }
        .on { background: linear-gradient(#5b5b5b, #8e8e8e); color: #fff; font-weight: bold; }
        .add { padding: 0 8px; font-weight: bold; font-size: 14px; }
      </style>
      <button class="on">Model</button><button>Layout1</button><button>Layout2</button><button class="add">+</button>`;
  }
}

class StatusBar extends CadElement {
  render() {
    return `<style>${BUTTON_RESET}
        :host { display: flex; gap: 1px; padding: 1px 1px 1px 0; white-space: nowrap; }
        div { display: flex; box-sizing: border-box; border: 1px solid #777; background: #505050; }
        button { box-sizing: border-box; width: 25px; }
        .split { border-left: 1px solid #777; }
        .coords { width: 150px; padding-left: 4px; }
        .d { width: 14px; }
        .s { width: 22px; }
        .scale { width: 32px; gap: 4px; }
        .units { width: 57px; }
        .glow { filter: drop-shadow(0 0 1px #1673e0); }
      </style>
      <div><button class="coords">33.1483, 26.1908, 0.0000</button></div>
      <div>${iconButton("grid", "Grid", "glow")}</div>
      <div>${iconButton("ortho", "Ortho")}${iconButton("iso", "Isometric")}${iconButton("down", "More", "d")}${iconButton("track", "Tracking", "glow split")}${iconButton("osnap", "Object snap", "glow")}${iconButton("down", "More", "d")}${iconButton("cycle", "Selection cycling", "split")}</div>
      <div>${iconButton("ucs", "Dynamic UCS")}</div>
      <div>${iconButton("person1", "Annotation visibility", "glow")}${iconButton("person2", "Auto scale", "glow s")}${iconButton("person3", "Annotation scale")}<button class="scale">1:1${icon("down")}</button></div>
      <div>${iconButton("gear", "Workspace")}${iconButton("down", "More", "d")}${iconButton("plus", "Annotation monitor", "split")}</div>
      <div>${iconButton("ruler", "Units")}<button class="units">Decimal</button>${iconButton("down", "More", "d")}${iconButton("props", "Quick properties", "split")}</div>
      <div>${iconButton("lock", "Lock UI")}${iconButton("down", "More", "d")}${iconButton("shapes", "Isolate objects", "split")}</div>
      <div>${iconButton("perf", "Graphics performance", "glow")}</div>
      <div>${iconButton("trust", "Trusted file", "s")}</div>
      <div>${iconButton("full", "Clean screen")}${iconButton("burger", "Customization", "s")}</div>`;
  }
}

customElements.define("cad-icon", CadIcon);
customElements.define("app-header", AppHeader);
customElements.define("ribbon-tabs", RibbonTabs);
customElements.define("cad-ribbon", CadRibbon);
customElements.define("ribbon-panel", RibbonPanel);
customElements.define("tool-stack", ToolStack);
customElements.define("big-tool", BigTool);
customElements.define("small-tool", SmallTool);
customElements.define("prop-combo", PropCombo);
customElements.define("drawing-area", DrawingArea);
customElements.define("view-cube", ViewCube);
customElements.define("nav-bar", NavBar);
customElements.define("command-line", CommandLine);
customElements.define("layout-tabs", LayoutTabs);
customElements.define("status-bar", StatusBar);
customElements.define("cad-app", CadApp);
</script>
</body>
</html>
